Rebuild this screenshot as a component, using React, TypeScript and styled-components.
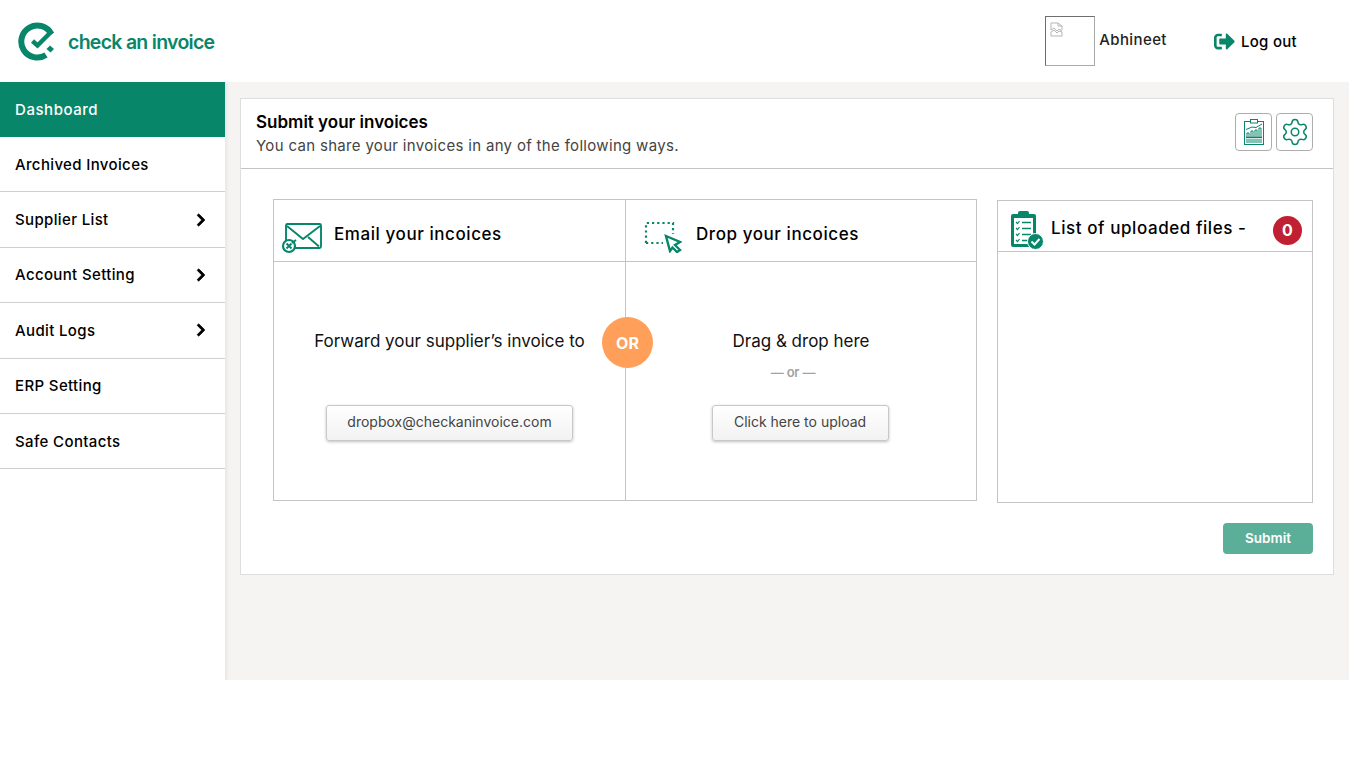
import * as React from 'react';
import styled, { createGlobalStyle } from 'styled-components';
import { FaChevronRight, FaSignOutAlt } from 'react-icons/fa';
import { Settings } from 'lucide-react';

const green = '#08866a';
const line = '#c4c4c4';

const menuItems = [
  { label: 'Dashboard', active: true, arrow: false },
  { label: 'Archived Invoices', active: false, arrow: false },
  { label: 'Supplier List', active: false, arrow: true },
  { label: 'Account Setting', active: false, arrow: true },
  { label: 'Audit Logs', active: false, arrow: true },
  { label: 'ERP Setting', active: false, arrow: false },
  { label: 'Safe Contacts', active: false, arrow: false },
];

const LogoMark = () => (
  <svg width="38" height="40" viewBox="0 0 38 40" fill="none">
    <path d="M33.5 12.2A16 16 0 1 0 28 33" stroke={green} strokeWidth="6" />
    <path d="M14.5 19L19.5 23.5L33.5 9.5" stroke={green} strokeWidth="4.5" />
    <path d="M32 23.5L36 27L32.5 30.5L28.5 27Z" fill={green} />
  </svg>
);

const BrokenImage = () => (
  <svg width="13" height="15" viewBox="0 0 13 15" fill="none" stroke="#b5b5b5" strokeWidth="1">
    <path d="M1 8V1H8L12 4V8" />
    <path d="M8 1V4H12" />
    <path d="M1 8L4 6L7 9L9 7L12 9" />
    <path d="M1 10V14H12V10L9 9L7 11L4 8L1 10Z" />
  </svg>
);

const ReportIcon = () => (
  <svg width="20" height="26" viewBox="0 0 20 26" fill="none" stroke={green} strokeWidth="1">
    <rect x="0.5" y="2.5" width="19" height="23" />
    <rect x="6.5" y="0.5" width="7" height="3.5" fill="#fff" />
    <path d="M2 10.5L8 8L12 8.5L18 5" />
    <path d="M3 18v-4h2v4M7 18v-6h2v6M11 18v-7h2v7M15 18v-9h2v9" />
    <path d="M2 18.5H18" strokeWidth="1.4" />
    <path d="M2 21H18M2 23H18" />
  </svg>
);

const MailIcon = () => (
  <svg width="42" height="32" viewBox="0 0 42 32" fill="none" stroke={green} strokeWidth="1.9">
    <path d="M5 19V3.5Q5 2 6.5 2H38.5Q40 2 40 3.5V24.5Q40 26 38.5 26H13" />
    <path d="M6 4L22 17L39 4" />
    <path d="M27 15L38 24.5" />
    <path d="M15 18L11 21" />
    <circle cx="8" cy="24" r="6" strokeWidth="2.2" />
    <path d="M5.5 21.5L10.5 26.5M10.5 21.5L5.5 26.5" strokeWidth="2" />
  </svg>
);

const DropIcon = () => (
  <svg width="38" height="32" viewBox="0 0 38 32" fill="none">
    <path
      d="M2 22V2H29V13M2 22H19"
      stroke={green}
      strokeWidth="2.2"
      strokeDasharray="2.2 3"
    />
    <path
      d="M22 15L36 21L31 24L36 29L33 31L28.5 26.5L26 30Z"
      stroke={green}
      strokeWidth="2.4"
      fill="#fff"
    />
  </svg>
);

const ListIcon = () => (
  <svg width="34" height="40" viewBox="0 0 34 40" fill="none">
    <rect x="1" y="4" width="25" height="33" rx="2" fill={green} />
    <rect x="8" y="1" width="11" height="6" rx="2" fill={green} />
    <rect x="4" y="8" width="19" height="26" fill="#fff" />
    <path
      d="M6 12L7.5 13.5L9.5 11M6 18L7.5 19.5L9.5 17M6 24L7.5 25.5L9.5 23M6 30L7.5 31.5L9.5 29"
      stroke={green}
      strokeWidth="1.2"
    />
    <path d="M12 12.5H21M12 18.5H21M12 24.5H21M12 30.5H19" stroke={green} strokeWidth="1.6" />
    <circle cx="25.5" cy="31.5" r="8" fill={green} stroke="#fff" strokeWidth="1" />
    <path d="M21.5 31.5L24.5 34.5L29.5 29" stroke="#fff" strokeWidth="2" />
  </svg>
);

const App = () => {
  return <Page>
    <GlobalStyle />
    <Header>
      <Logo>
        <LogoMark />
        <LogoText>check an invoice</LogoText>
      </Logo>
      <UserArea>
        <Avatar><BrokenImage /></Avatar>
        <UserName>Abhineet</UserName>
        <LogOut>
          <FaSignOutAlt size={21} color={green} />
          <span>Log out</span>
        </LogOut>
      </UserArea>
    </Header>
    <Layout>
      <Sidebar>
        {menuItems.map((item) => (
          <MenuItem key={item.label} $active={item.active}>
            {item.label}
            {item.arrow && <FaChevronRight size={14} color="#000" stroke="#000" strokeWidth={30} />}
          </MenuItem>
        ))}
      </Sidebar>
      <Main>
        <Card>
          <CardHeader>
            <div>
              <CardTitle>Submit your invoices</CardTitle>
              <CardSubtitle>You can share your invoices in any of the following ways.</CardSubtitle>
            </div>
            <CardActions>
              <IconButton><ReportIcon /></IconButton>
              <IconButton><Settings size={30} color={green} strokeWidth={1.2} /></IconButton>
            </CardActions>
          </CardHeader>
          <CardBody>
            <Panels>
              <PanelHead>
                <MailSlot><MailIcon /></MailSlot>
                <PanelTitle>Email your incoices</PanelTitle>
              </PanelHead>
              <PanelHead>
                <DropSlot><DropIcon /></DropSlot>
                <PanelTitle>Drop your incoices</PanelTitle>
              </PanelHead>
              <PanelContent>
                <PanelLead>Forward your supplier’s invoice to</PanelLead>
                <ActionButton $width={247}>dropbox@checkaninvoice.com</ActionButton>
              </PanelContent>
              <PanelContent>
                <PanelLead>Drag &amp; drop here</PanelLead>
                <OrText>— or —</OrText>
                <UploadButton $width={177}>Click here to upload</UploadButton>
              </PanelContent>
              <OrBadge>OR</OrBadge>
            </Panels>
            <FilesColumn>
              <FilesPanel>
                <FilesHead>
                  <FilesTitle>
                    <ListIcon />
                    <FilesLabel>List of uploaded files -</FilesLabel>
                  </FilesTitle>
                  <CountBadge>0</CountBadge>
                </FilesHead>
              </FilesPanel>
              <SubmitButton>Submit</SubmitButton>
            </FilesColumn>
          </CardBody>
        </Card>
      </Main>
    </Layout>
  </Page>;
};

const GlobalStyle = createGlobalStyle`
  html, body {
    margin: 0;
    background: #fff;
  }
  body {
    font-family: Inter, "Liberation Sans", sans-serif;
    color: #000;
  }
  * {
    box-sizing: border-box;
  }
`;

const Page = styled.div`
  width: 1349px;
`;

const Header = styled.header`
  height: 82px;
  display: flex;
  align-items: center;
  justify-content: space-between;
  padding: 0 52px 0 18px;
  background: #fff;
`;

const Logo = styled.div`
  display: flex;
  align-items: center;
  gap: 12px;
  padding-top: 2px;
`;

const LogoText = styled.span`
  font-size: 19.5px;
  font-weight: 600;
  letter-spacing: -0.72px;
  color: ${green};
`;

const UserArea = styled.div`
  display: flex;
  align-items: center;
`;

const Avatar = styled.div`
  width: 50px;
  height: 50px;
  padding: 4px;
  border: 1px solid;
  border-color: #6e6e6e #a9a9a9 #a9a9a9 #6e6e6e;
`;

const UserName = styled.span`
  margin: 0 47px 4px 4px;
  font-size: 15px;
  font-weight: 500;
  letter-spacing: 0.4px;
  color: #222;
`;

const LogOut = styled.div`
  display: flex;
  align-items: center;
  gap: 6px;
  font-size: 15px;
  font-weight: 500;
  letter-spacing: 0.3px;
`;

const Layout = styled.div`
  display: flex;
  height: 598px;
  background: #f5f4f2;
`;

const Sidebar = styled.nav`
  flex: none;
  width: 226px;
  background: #fff;
  border-right: 1px solid #eceae8;
  box-shadow: 1px 0 3px rgba(0, 0, 0, 0.06);
`;

const MenuItem = styled.div<{ $active: boolean }>`
  height: ${({ $active }) => ($active ? '55px' : '55.4px')};
  display: flex;
  align-items: center;
  justify-content: space-between;
  padding: 0 17px 0 15px;
  font-size: 15px;
  font-weight: 500;
  letter-spacing: ${({ $active }) => ($active ? '0.55px' : '0.36px')};
  color: ${({ $active }) => ($active ? '#fff' : '#000')};
  background: ${({ $active }) => ($active ? green : '#fff')};
  border-bottom: 1px solid ${({ $active }) => ($active ? green : '#cfcfcf')};
`;

const Main = styled.main`
  flex: 1;
  min-width: 0;
  padding: 16px 15px 0 14px;
`;

const Card = styled.section`
  background: #fff;
  border: 1px solid #dedede;
`;

const CardHeader = styled.div`
  height: 70px;
  display: flex;
  align-items: center;
  justify-content: space-between;
  padding: 0 20px 0 15px;
  border-bottom: 1px solid ${line};
`;

const CardTitle = styled.div`
  font-size: 17px;
  font-weight: 600;
  line-height: 24px;
`;

const CardSubtitle = styled.div`
  font-size: 15px;
  line-height: 24px;
  letter-spacing: 0.32px;
  color: #444;
`;

const CardActions = styled.div`
  display: flex;
  gap: 4px;
  margin-bottom: 4px;
`;

const IconButton = styled.div`
  width: 37px;
  height: 38px;
  display: flex;
  align-items: center;
  justify-content: center;
  border: 1px solid #adadad;
  border-radius: 4px;
  background: #fff;
`;

const CardBody = styled.div`
  display: flex;
  gap: 20px;
  padding: 30px 20px 20px 32px;
`;

const Panels = styled.div`
  position: relative;
  width: 704px;
  height: 302px;
  display: grid;
  grid-template-columns: 352px 1fr;
  grid-template-rows: 62px 1fr;
  border: 1px solid ${line};
`;

const PanelHead = styled.div`
  display: flex;
  align-items: center;
  padding-top: 6px;
  border-bottom: 1px solid ${line};
  &:nth-child(odd) {
    border-right: 1px solid ${line};
  }
`;

const MailSlot = styled.div`
  width: 60px;
  padding: 8px 0 0 7px;
  display: flex;
`;

const DropSlot = styled.div`
  width: 70px;
  padding: 6px 0 0 18px;
  display: flex;
`;

const PanelTitle = styled.div`
  font-size: 17px;
  font-weight: 500;
  letter-spacing: 0.57px;
`;

const PanelContent = styled.div`
  display: flex;
  flex-direction: column;
  align-items: center;
  padding-top: 67px;
  &:nth-of-type(3) {
    border-right: 1px solid ${line};
  }
`;

const PanelLead = styled.div`
  font-size: 17px;
  line-height: 24px;
  height: 24px;
  color: #111;
`;

const OrText = styled.div`
  margin: 11px 16px 0 0;
  font-size: 13px;
  line-height: 16px;
  font-weight: 600;
  letter-spacing: -0.2px;
  color: #a3a3a3;
`;

const ActionButton = styled.div<{ $width: number }>`
  width: ${({ $width }) => $width}px;
  height: 36px;
  margin-top: auto;
  margin-bottom: 59px;
  padding-bottom: 3px;
  display: flex;
  align-items: center;
  justify-content: center;
  font-size: 14px;
  color: #444;
  background: linear-gradient(#fff, #f2f2f2);
  border: 1px solid #c8c8c8;
  border-radius: 3px;
  box-shadow: 0 1px 3px rgba(0, 0, 0, 0.25);
`;

const UploadButton = styled(ActionButton)`
  margin-right: 2px;
`;

const OrBadge = styled.div`
  position: absolute;
  left: 328px;
  top: 117px;
  width: 51px;
  height: 51px;
  display: flex;
  align-items: center;
  justify-content: center;
  border-radius: 50%;
  background: #ff9f5a;
  color: #fff;
  font-size: 16px;
  font-weight: 700;
`;

const FilesColumn = styled.div`
  flex: 1;
  min-width: 0;
  display: flex;
  flex-direction: column;
  align-items: flex-end;
  padding-top: 1px;
`;

const FilesPanel = styled.div`
  width: 100%;
  height: 303px;
  border: 1px solid ${line};
`;

const FilesHead = styled.div`
  height: 51px;
  display: flex;
  align-items: center;
  justify-content: space-between;
  padding: 8px 10px 0 12px;
  border-bottom: 1px solid ${line};
`;

const FilesTitle = styled.div`
  display: flex;
  align-items: center;
  gap: 7px;
`;

const FilesLabel = styled(PanelTitle)`
  margin-bottom: 4px;
`;

const CountBadge = styled.div`
  width: 29px;
  height: 29px;
  display: flex;
  align-items: center;
  justify-content: center;
  border-radius: 50%;
  background: #c02032;
  color: #fff;
  font-size: 16px;
  font-weight: 700;
`;

const SubmitButton = styled.div`
  width: 90px;
  height: 31px;
  margin-top: 20px;
  padding-bottom: 2px;
  display: flex;
  align-items: center;
  justify-content: center;
  border-radius: 4px;
  background: #5bae98;
  color: #fff;
  font-size: 13.5px;
  font-weight: 600;
`;

export default App;
